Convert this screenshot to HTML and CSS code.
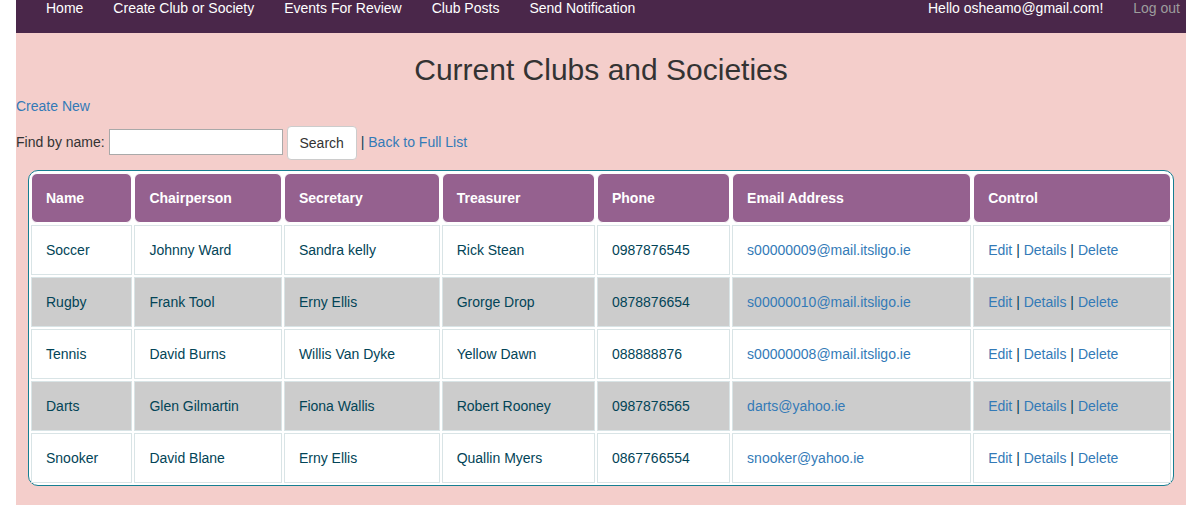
FILE: index.html
```html
<!DOCTYPE html>
<html lang="en">
<head>
<meta charset="utf-8">
<meta name="viewport" content="width=device-width, initial-scale=1">
<title>Current Clubs and Societies</title>
<link rel="stylesheet" href="styles.css">
</head>
<body>
<div class="page">
  <nav class="navbar">
    <a href="#">Home</a>
    <a href="#">Create Club or Society</a>
    <a href="#">Events For Review</a>
    <a href="#">Club Posts</a>
    <a href="#">Send Notification</a>
    <a class="user" href="#">Hello osheamo@gmail.com!</a>
    <a class="logout" href="#">Log out</a>
  </nav>
  <main class="content">
    <h2 class="title">Current Clubs and Societies</h2>
    <p class="create"><a href="#">Create New</a></p>
    <form class="search">
      <label for="find">Find by name:</label>
      <input id="find" type="text">
      <button type="button">Search</button>
      <span class="back">| <a href="#">Back to Full List</a></span>
    </form>
    <div class="table-wrap">
      <table class="clubs">
        <thead>
          <tr><th>Name</th><th>Chairperson</th><th>Secretary</th><th>Treasurer</th><th>Phone</th><th>Email Address</th><th>Control</th></tr>
        </thead>
        <tbody>
          <tr><td>Soccer</td><td>Johnny Ward</td><td>Sandra kelly</td><td>Rick Stean</td><td>0987876545</td><td><a href="#">s00000009@mail.itsligo.ie</a></td><td><a href="#">Edit</a> | <a href="#">Details</a> | <a href="#">Delete</a></td></tr>
          <tr><td>Rugby</td><td>Frank Tool</td><td>Erny Ellis</td><td>Grorge Drop</td><td>0878876654</td><td><a href="#">s00000010@mail.itsligo.ie</a></td><td><a href="#">Edit</a> | <a href="#">Details</a> | <a href="#">Delete</a></td></tr>
          <tr><td>Tennis</td><td>David Burns</td><td>Willis Van Dyke</td><td>Yellow Dawn</td><td>088888876</td><td><a href="#">s00000008@mail.itsligo.ie</a></td><td><a href="#">Edit</a> | <a href="#">Details</a> | <a href="#">Delete</a></td></tr>
          <tr><td>Darts</td><td>Glen Gilmartin</td><td>Fiona Wallis</td><td>Robert Rooney</td><td>0987876565</td><td><a href="#">darts@yahoo.ie</a></td><td><a href="#">Edit</a> | <a href="#">Details</a> | <a href="#">Delete</a></td></tr>
          <tr><td>Snooker</td><td>David Blane</td><td>Erny Ellis</td><td>Quallin Myers</td><td>0867766554</td><td><a href="#">snooker@yahoo.ie</a></td><td><a href="#">Edit</a> | <a href="#">Details</a> | <a href="#">Delete</a></td></tr>
        </tbody>
      </table>
    </div>
  </main>
</div>
</body>
</html>
```
FILE: styles.css
```css
* { box-sizing: border-box; }
body {
  margin: 0;
  background: #fff;
  color: #333;
  font: 14px/20px "Liberation Sans", Arial, sans-serif;
}
a { color: #337ab7; text-decoration: none; }
a:hover { text-decoration: underline; }
.page {
  min-height: 100vh;
  margin: 0 12px 0 16px;
  background: #f4cecb;
}
.navbar {
  display: flex;
  gap: 30px;
  padding: 0 6px 17px 30px;
  background: #4a274a;
  line-height: 16px;
}
.navbar a { color: #fff; }
.navbar .user { margin-left: auto; }
.navbar .logout { color: #9d9d9d; }
.content { padding: 20px 0 19px; }
.title {
  margin: 0 0 10px;
  font-size: 30px;
  font-weight: 500;
  line-height: 33px;
  text-align: center;
}
.create { margin: 0 0 10px; }
.search { margin-bottom: 10px; }
.search input {
  width: 174px;
  height: 26px;
  padding: 1px 2px;
  border: 1px solid #a9a9a9;
  background: #fff;
  font: inherit;
}
.search button {
  padding: 6px 12px;
  border: 1px solid #ccc;
  border-radius: 4px;
  background: #fff;
  color: #333;
  font: inherit;
  vertical-align: middle;
}
.back { color: #024457; }
.table-wrap { margin: 0 12px; }
.clubs {
  width: 100%;
  border: 1px solid #167f92;
  border-radius: 10px;
  border-spacing: 2px;
  border-collapse: separate;
  background: #fff;
  color: #024457;
}
.clubs th, .clubs td {
  padding: 14px;
  border: 1px solid #d9e4e6;
  text-align: left;
}
.clubs th {
  border-color: #fff;
  border-radius: 6px;
  background: #95618f;
  color: #fff;
}
.clubs tbody tr:nth-child(even) td { background: #ccc; }
```
